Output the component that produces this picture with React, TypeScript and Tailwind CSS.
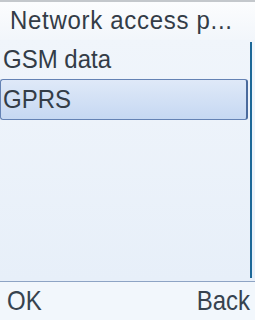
export default function App() {
  return (
    <div
      className="flex h-[320px] w-[255px] flex-col overflow-hidden bg-[#f4f8fc] text-[#333c47]"
      style={{ fontFamily: '"Liberation Sans", Arial, sans-serif' }}
    >
      <div className="h-[2px] bg-[#c4c8cc]" />
      <div className="flex h-[38px] items-center bg-gradient-to-b from-[#fcfdfe] to-[#f2f6fb] pl-[10px] text-[24px] leading-none tracking-[0.7px]">
        <span className="inline-block scale-y-[1.04]">Network access p...</span>
      </div>
      <div className="flex flex-1 bg-gradient-to-b from-[#f0f5fb] to-[#e7eff9]">
        <div className="flex w-[248px] flex-col">
          <div className="flex h-[39px] items-center pl-[3px] text-[24px] leading-none">
            <span className="inline-block scale-y-[1.06]">GSM data</span>
          </div>
          <div className="flex h-[41px] items-center rounded-[3px] border border-r-2 border-[#6482b4] border-r-[#4a6a9c] bg-gradient-to-b from-[#dfe9f8] to-[#c6d8f2] pl-[2px] text-[24px] leading-none">
            <span className="inline-block scale-y-[1.06]">GPRS</span>
          </div>
        </div>
        <div className="ml-[2px] mt-[2px] mb-[3px] w-[2px] bg-[#1c6898]" />
      </div>
      <div className="h-px bg-[#8ea4c4]" />
      <div className="flex h-[38px] items-center justify-between bg-[#f2f7fc] pl-[7px] pr-[5px] text-[24px] leading-none text-[#37434f]">
        <span className="inline-block scale-y-[1.16]">OK</span>
        <span className="inline-block scale-y-[1.16]">Back</span>
      </div>
    </div>
  );
}
